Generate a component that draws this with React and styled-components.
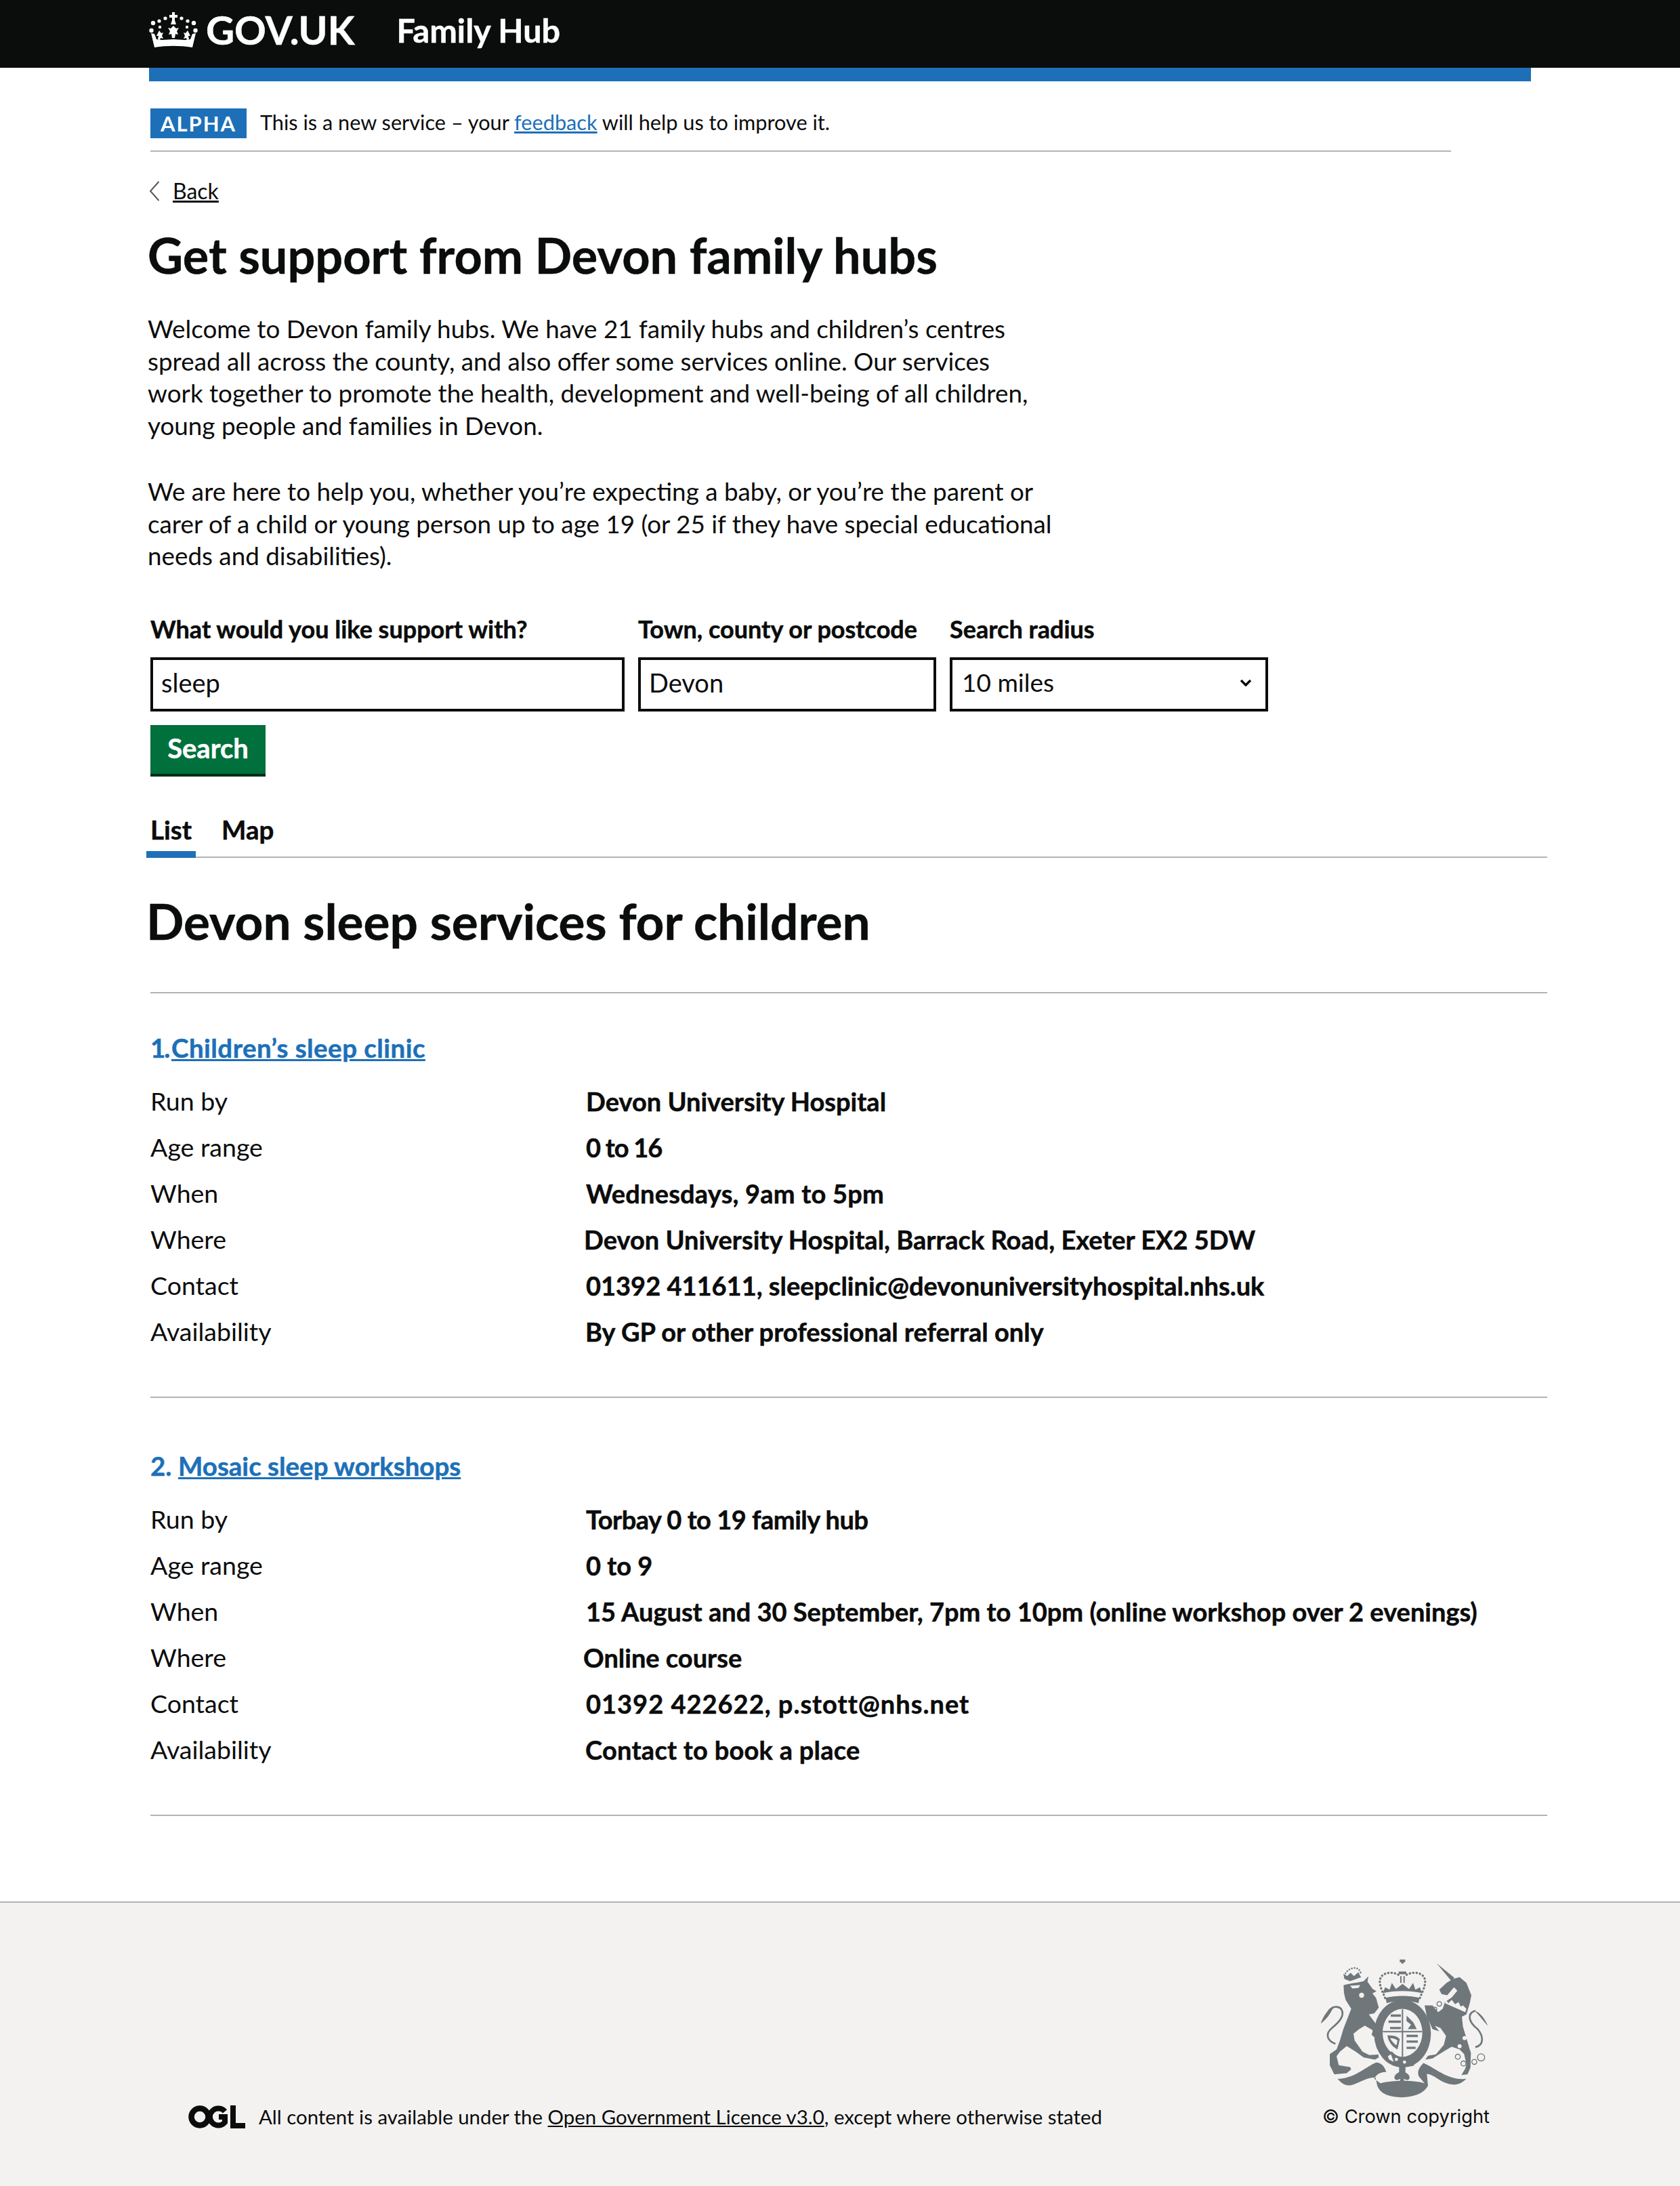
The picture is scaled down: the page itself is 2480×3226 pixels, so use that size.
import React from 'react';
import styled, { createGlobalStyle, css } from 'styled-components';

const FONT = `"Lato", "Liberation Sans", sans-serif`;
const INK = '#0b0c0c';
const BLUE = '#1d70b8';
const RULE = '#b1b4b6';
const CREST = '#6f777b';
const PAPER = '#f3f2f1';

// row = [key, value, left nudge, tracking]
const services = [
    {
        id: 1,
        name: 'Children’s sleep clinic',
        top: 58,
        numberWidth: 31,
        numberTracking: -2,
        nameTracking: 0.45,
        rows: [
            ['Run by', 'Devon University Hospital', 0, 0],
            ['Age range', '0 to 16', 0, -1.2],
            ['When', 'Wednesdays, 9am to 5pm', 0, 0.2],
            ['Where', 'Devon University Hospital, Barrack Road, Exeter EX2 5DW', -3, 0],
            ['Contact', '01392 411611, sleepclinic@devonuniversityhospital.nhs.uk', 0, 0],
            ['Availability', 'By GP or other professional referral only', -1, 0],
        ],
    },
    {
        id: 2,
        name: 'Mosaic sleep workshops',
        top: 78,
        numberWidth: 41,
        numberTracking: 0,
        nameTracking: 0,
        rows: [
            ['Run by', 'Torbay 0 to 19 family hub', 0, -0.5],
            ['Age range', '0 to 9', 0, 0],
            ['When', '15 August and 30 September, 7pm to 10pm (online workshop over 2 evenings)', 0, 0],
            ['Where', 'Online course', -4, 0],
            ['Contact', '01392 422622, p.stott@nhs.net', 0, 1],
            ['Availability', 'Contact to book a place', -1, 0.25],
        ],
    },
];

const CrownLogo = () => (
    <svg width="72" height="52" viewBox="0 0 72 52" fill="#fff">
        <path d="M34 0h4v4h4v4h-4v4l2 6h-8l2-6V8h-4V4h4z" />
        <circle cx="3.5" cy="27" r="3.2" />
        <circle cx="6" cy="16" r="3.2" />
        <circle cx="15" cy="13" r="2.6" />
        <circle cx="24" cy="9" r="2.6" />
        <circle cx="48" cy="9" r="2.6" />
        <circle cx="57" cy="13" r="2.6" />
        <circle cx="66" cy="16" r="3.2" />
        <circle cx="68.5" cy="27" r="3.2" />
        <circle cx="16" cy="22" r="2.2" />
        <circle cx="56" cy="22" r="2.2" />
        <path d="M36 20l4 4 4-1-3 5 2 5-4-1-1 6h-4l-1-6-4 1 2-5-3-5 4 1z" />
        <path d="M15 27l3 4 3-1-2 5 2 4-4-1-1 3-3-1 1-5-3 0 2-4z" />
        <path d="M57 27l-3 4-3-1 2 5-2 4 4-1 1 3 3-1-1-5 3 0-2-4z" />
        <path d="M3 31l5 1 3 8 8 1 17-1 17 1 8-1 3-8 5-1-5 21c-18-3-38-3-56 0z" />
    </svg>
);

const OglLogo = () => (
    <svg width="84" height="34" viewBox="0 0 84 34">
        <circle cx="17" cy="17" r="12.5" fill="none" stroke={INK} strokeWidth="8.5" />
        <path d="M54 9a12.5 12.5 0 1 0 0 16v-8h-9" fill="none" stroke={INK} strokeWidth="8" />
        <path d="M62 0h8v26h14v8H62z" fill={INK} />
    </svg>
);

const BackChevron = () => (
    <svg width="16" height="30" viewBox="0 0 16 30">
        <path d="M14.5 1L2 15l12.5 14" fill="none" stroke="#505a5f" strokeWidth="2" />
    </svg>
);

const SelectChevron = () => (
    <svg width="18" height="11" viewBox="0 0 18 11">
        <path d="M2 2l7 7 7-7" fill="none" stroke={INK} strokeWidth="3.5" />
    </svg>
);

const RoyalCrest = () => (
    <svg width="250" height="207" viewBox="150 90 750 620">
        <g fill={CREST}>
            {/* lion */}
            <path d="M256 206C280 198 320 195 345 188L366 166L362 190L385 222L402 232L384 242L400 262L412 305L392 330L368 335L396 372L410 395L424 425L424 442L395 440L380 425L385 405L350 385L325 400L300 420L305 450L340 500L370 515L410 512L412 525L395 535L345 525L310 500L270 475L240 500L225 520L235 560L285 568L290 578L270 595L215 600L195 560L195 510L225 490L240 450L255 400L290 310L265 270L258 240Z" />
            <path d="M155 375C165 345 190 305 215 298C200 325 185 355 155 375Z" />
            <path d="M285 188L260 178L255 155L272 165L287 150L302 165L322 148L330 165L335 170Z" />
            {/* unicorn */}
            <path d="M668 108L746 172L736 190Z" />
            <path d="M680 225L712 195L740 178L770 170L800 195L822 250L815 285L800 335L780 345L785 390L800 440L815 490L820 505L818 570L805 600L778 603L795 575L800 555L790 510L770 490L735 478L705 495L650 530L618 535L630 518L665 512L700 470L710 430L685 395L660 385L680 410L650 400L625 345L615 295L650 295L675 325L695 310L705 280L735 260L760 230L745 215L715 250L690 245Z" />
            <path d="M895 385C880 350 860 325 835 318C860 340 875 365 895 385Z" />
            {/* shield and garter */}
            <ellipse cx="517" cy="420" rx="126" ry="150" />
            <path d="M442 262C480 250 555 250 592 262L588 285C550 272 485 272 447 285Z" />
            {/* royal crown */}
            <path d="M505 92h24v12h-7v6h-10v-6h-7z" />
            <path d="M500 145h34v12h-34zM507 165h6v30h-6zM521 165h6v30h-6z" />
            <path d="M430 240L440 215L460 225L470 195L488 222L517 200L546 222L564 195L574 225L594 215L604 240C550 228 484 228 430 240Z" />
        </g>
        <g fill="none" stroke={CREST} strokeWidth="8">
            <path d="M220 465C180 450 175 420 205 395C235 370 265 340 245 310C230 295 205 300 190 320" />
            <path d="M840 480C880 470 875 430 850 400C810 370 800 330 840 318" />
            <path d="M440 262C425 225 405 190 425 165C445 145 480 148 500 160" strokeDasharray="1 14" strokeWidth="10" strokeLinecap="round" />
            <path d="M594 262C609 225 629 190 609 165C589 145 554 148 534 160" strokeDasharray="1 14" strokeWidth="10" strokeLinecap="round" />
            <path d="M262 165C262 135 320 110 332 150" strokeDasharray="1 11" strokeWidth="7" strokeLinecap="round" />
        </g>
        <g fill="none" stroke={CREST} strokeWidth="4">
            <circle cx="680" cy="288" r="10" />
            <circle cx="660" cy="312" r="9" />
            <circle cx="670" cy="372" r="12" />
            <circle cx="762" cy="522" r="11" />
            <circle cx="787" cy="552" r="11" />
            <circle cx="835" cy="545" r="11" />
            <circle cx="865" cy="525" r="16" />
        </g>
        <g fill={PAPER}>
            <ellipse cx="517" cy="416" rx="88" ry="106" />
            <circle cx="800" cy="395" r="11" />
            <circle cx="792" cy="440" r="9" />
            <circle cx="770" cy="476" r="9" />
            <circle cx="336" cy="250" r="11" />
            <path d="M285 208L330 205L322 218L295 220Z" />
            <path d="M705 285L795 325L800 310L785 295L775 300L765 280L750 290L735 270L720 285L710 270Z" />
            <path d="M330 400L350 385L385 405L380 425L395 440L350 470L320 440Z" />
        </g>
        <g fill={CREST}>
            {/* quarterings */}
            <path d="M514 312h6v210h-6zM430 408h174v6H430z" />
            <path d="M465 335h45v10h-45zM455 362h55v10h-55zM462 390h48v10h-48z" />
            <path d="M535 340L565 370L580 400H540L555 380L535 365Z" />
            <path d="M535 425h50v10h-50zM535 450h50v10h-50zM535 478h40v10h-40z" />
            <path d="M450 428C480 425 500 435 505 445L495 490C475 480 455 460 450 428ZM462 440C470 455 480 465 490 472L495 450C485 442 472 440 462 440Z" fillRule="evenodd" />
            {/* belt */}
            <path d="M443 515L470 498C490 525 540 540 590 530L565 563C520 572 470 560 445 542Z" />
            {/* ribbon */}
            <path d="M230 620C300 620 350 570 400 548C425 548 440 570 445 590C420 590 400 600 392 620L420 640C470 625 570 625 615 640L590 610C580 590 590 570 610 550C660 570 720 630 800 620C770 650 740 652 700 635C670 620 650 600 625 598L630 650C610 690 560 700 515 702C460 700 420 690 405 650L398 615C370 610 340 630 300 645C270 655 250 645 230 620Z" />
            <path d="M502 565h28v26h-28zM515 585C530 590 552 600 548 618C540 632 528 622 522 620L528 640H502L508 620C502 622 490 632 482 618C478 600 500 590 515 585Z" />
        </g>
        <g fill={PAPER}>
            <circle cx="490" cy="534" r="7" />
            <circle cx="526" cy="546" r="7" />
            <path d="M452 520L466 512L478 545L458 535Z" />
        </g>
    </svg>
);

const App = () => {
    return (
        <>
            <GlobalStyle />
            <StHeader>
                <StLogo>
                    <CrownLogo />
                    <StWordmark>GOV.UK</StWordmark>
                </StLogo>
                <StServiceName>Family Hub</StServiceName>
            </StHeader>
            <StBlueBar />

            <StMain>
                <StPhaseBanner>
                    <StPhaseTag>ALPHA</StPhaseTag>
                    <StPhaseText>
                        This is a new service – your <StFeedback href="#">feedback</StFeedback> will help us to improve it.
                    </StPhaseText>
                </StPhaseBanner>

                <StBack>
                    <BackChevron />
                    <a href="#">Back</a>
                </StBack>
                <StTitle>Get support from Devon family hubs</StTitle>

                <StIntro>
                    Welcome to Devon family hubs. We have 21 family hubs and children’s centres<br />
                    spread all across the county, and also offer some services online. Our services<br />
                    work together to promote the health, development and well-being of all children,<br />
                    young people and families in Devon.
                </StIntro>
                <StIntro $gap={50}>
                    We are here to help you, whether you’re expecting a baby, or you’re the parent or<br />
                    carer of a child or young person up to age 19 (or 25 if they have special educational<br />
                    needs and disabilities).
                </StIntro>

                <StSearchRow>
                    <StField $width={700}>
                        <StLabel htmlFor="support">What would you like support with?</StLabel>
                        <StInput id="support" defaultValue="sleep" />
                    </StField>
                    <StField $width={440}>
                        <StLabel htmlFor="place">Town, county or postcode</StLabel>
                        <StInput id="place" defaultValue="Devon" />
                    </StField>
                    <StField $width={470}>
                        <StLabel htmlFor="radius">Search radius</StLabel>
                        <StSelectBox>
                            <StSelect id="radius" defaultValue="10 miles">
                                <option>10 miles</option>
                            </StSelect>
                            <StSelectIcon><SelectChevron /></StSelectIcon>
                        </StSelectBox>
                    </StField>
                </StSearchRow>
                <StButton type="button">Search</StButton>

                <StTabs>
                    <StTab $active>List</StTab>
                    <StTab>Map</StTab>
                </StTabs>

                <StResultsTitle>Devon sleep services for children</StResultsTitle>

                <StList>
                    {services.map((service) => (
                        <StService key={service.id} $top={service.top}>
                            <StServiceTitle>
                                <StNumber $width={service.numberWidth} $tracking={service.numberTracking}>{service.id}.</StNumber>
                                <StServiceLink href="#" $tracking={service.nameTracking}>{service.name}</StServiceLink>
                            </StServiceTitle>
                            <StRows>
                                {service.rows.map(([key, value, shift, tracking]) => (
                                    <StRow key={key}>
                                        <StKey>{key}</StKey>
                                        <StValue $shift={shift} $tracking={tracking}>{value}</StValue>
                                    </StRow>
                                ))}
                            </StRows>
                        </StService>
                    ))}
                </StList>
            </StMain>

            <StFooter>
                <StLicence>
                    <OglLogo />
                    <StLicenceText>
                        All content is available under the <a href="#">Open Government Licence v3.0</a>, except where otherwise stated
                    </StLicenceText>
                </StLicence>
                <StCopyright>
                    <RoyalCrest />
                    <StCopyrightText>© Crown copyright</StCopyrightText>
                </StCopyright>
            </StFooter>
        </>
    );
};

const GlobalStyle = createGlobalStyle`
    body {
        margin: 0;
        background: #fff;
        color: ${INK};
        font-family: ${FONT};
    }
    a {
        color: inherit;
    }
`;

// GDS Transport bold sits heavier than Lato bold
const heavy = css`
    font-weight: 700;
    -webkit-text-stroke: 0.5px currentColor;
`;

const StHeader = styled.header`
    display: flex;
    align-items: center;
    box-sizing: border-box;
    height: 100px;
    padding: 0 0 12px 220px;
    background: ${INK};
    color: #fff;
`;

const StLogo = styled.div`
    display: flex;
    align-items: center;
    gap: 12px;
`;

const StWordmark = styled.span`
    ${heavy}
    font-size: 58px;
    line-height: 1;
`;

const StServiceName = styled.span`
    ${heavy}
    margin-left: 62px;
    font-size: 48.5px;
`;

const StBlueBar = styled.div`
    width: 2040px;
    height: 20px;
    margin-left: 220px;
    background: ${BLUE};
`;

const StMain = styled.main`
    padding: 40px 196px 126px 222px;
`;

const StPhaseBanner = styled.div`
    display: flex;
    align-items: center;
    gap: 20px;
    width: 1920px;
    padding-bottom: 18px;
    border-bottom: 2px solid ${RULE};
`;

const StPhaseTag = styled.strong`
    display: flex;
    align-items: center;
    justify-content: center;
    width: 142px;
    height: 44px;
    background: ${BLUE};
    color: #fff;
    font-size: 31px;
    letter-spacing: 2px;
`;

const StPhaseText = styled.span`
    margin-top: -4px;
    font-size: 30.7px;
`;

const StFeedback = styled.a`
    color: ${BLUE};
`;

const StBack = styled.div`
    display: flex;
    align-items: center;
    gap: 19px;
    margin: 38px 0 0 -2px;
    font-size: 32px;
    line-height: 40px;
`;

const StTitle = styled.h1`
    ${heavy}
    margin: 34px 0 0 -4px;
    font-size: 72px;
    line-height: 80px;
`;

const StIntro = styled.p`
    margin: ${(props) => props.$gap || 46}px 0 0 -4px;
    font-size: 36.8px;
    line-height: 47.5px;
    white-space: nowrap;
`;

const StSearchRow = styled.div`
    display: flex;
    gap: 20px;
    margin-top: 63.5px;
`;

const StField = styled.div`
    display: flex;
    flex-direction: column;
    gap: 22px;
    width: ${(props) => props.$width}px;
`;

const StLabel = styled.label`
    ${heavy}
    font-size: 36px;
    line-height: 40px;
    white-space: nowrap;
`;

const StInput = styled.input`
    box-sizing: border-box;
    width: 100%;
    height: 80px;
    padding: 0 12px 7px;
    border: 4px solid ${INK};
    border-radius: 0;
    background: #fff;
    color: ${INK};
    font-family: ${FONT};
    font-size: 38px;
    outline: none;
`;

const StSelectBox = styled.div`
    position: relative;
`;

const StSelect = styled.select`
    display: block;
    box-sizing: border-box;
    width: 100%;
    height: 80px;
    padding: 0 14px 7px;
    border: 4px solid ${INK};
    border-radius: 0;
    appearance: none;
    background: #fff;
    color: ${INK};
    font-family: ${FONT};
    font-size: 37px;
`;

const StSelectIcon = styled.span`
    position: absolute;
    top: 32px;
    right: 24px;
    line-height: 0;
    pointer-events: none;
`;

const StButton = styled.button`
    display: block;
    width: 170px;
    height: 76px;
    margin-top: 20px;
    padding: 0 0 8px;
    border: 0;
    border-radius: 0;
    background: #00703c;
    box-shadow: inset 0 -4px 0 #002d18;
    color: #fff;
    font-family: ${FONT};
    font-size: 40px;
    ${heavy}
`;

const StTabs = styled.div`
    display: flex;
    gap: 44px;
    height: 78px;
    margin-top: 40px;
    border-bottom: 2px solid ${RULE};
`;

const StTab = styled.div`
    ${heavy}
    position: relative;
    font-size: 38.5px;
    line-height: 76px;

    ${(props) => props.$active && `
        &::after {
            content: '';
            position: absolute;
            left: -6px;
            right: -6px;
            bottom: -2px;
            height: 10px;
            background: ${BLUE};
        }
    `}
`;

const StResultsTitle = styled.h2`
    ${heavy}
    margin: 53px 0 0 -6px;
    font-size: 73px;
    line-height: 80px;
`;

const StList = styled.div`
    margin-top: 65px;
    border-top: 2px solid ${RULE};
`;

const StService = styled.section`
    padding: ${(props) => props.$top}px 0 62px;
    border-bottom: 2px solid ${RULE};
`;

const StServiceTitle = styled.h3`
    ${heavy}
    margin: 0;
    color: ${BLUE};
    font-size: 38.5px;
    line-height: 44px;
`;

const StNumber = styled.span`
    display: inline-block;
    width: ${(props) => props.$width}px;
    letter-spacing: ${(props) => props.$tracking}px;
`;

const StServiceLink = styled.a`
    letter-spacing: ${(props) => props.$tracking}px;
`;

const StRows = styled.dl`
    margin: 23px 0 0;
`;

const StRow = styled.div`
    display: flex;
    height: 68px;
    line-height: 68px;
`;

const StKey = styled.dt`
    width: 643px;
    font-size: 37.5px;
`;

const StValue = styled.dd`
    ${heavy}
    margin: 0 0 0 ${(props) => props.$shift}px;
    font-size: 38px;
    letter-spacing: ${(props) => props.$tracking}px;
    white-space: nowrap;
`;

const StFooter = styled.footer`
    display: flex;
    align-items: flex-end;
    justify-content: space-between;
    box-sizing: border-box;
    height: 421px;
    padding: 84px 282px 85px 278px;
    border-top: 2px solid ${RULE};
    background: ${PAPER};
`;

const StLicence = styled.div`
    display: flex;
    align-items: center;
    gap: 20px;
`;

const StLicenceText = styled.span`
    font-size: 29.4px;
    line-height: 36px;
`;

const StCopyright = styled.div`
    display: flex;
    flex-direction: column;
    gap: 8px;
    width: 250px;
`;

const StCopyrightText = styled.span`
    padding-left: 4px;
    font-family: "Inter", "Liberation Sans", sans-serif;
    font-size: 27.3px;
    line-height: 36px;
    white-space: nowrap;
`;

export default App;
